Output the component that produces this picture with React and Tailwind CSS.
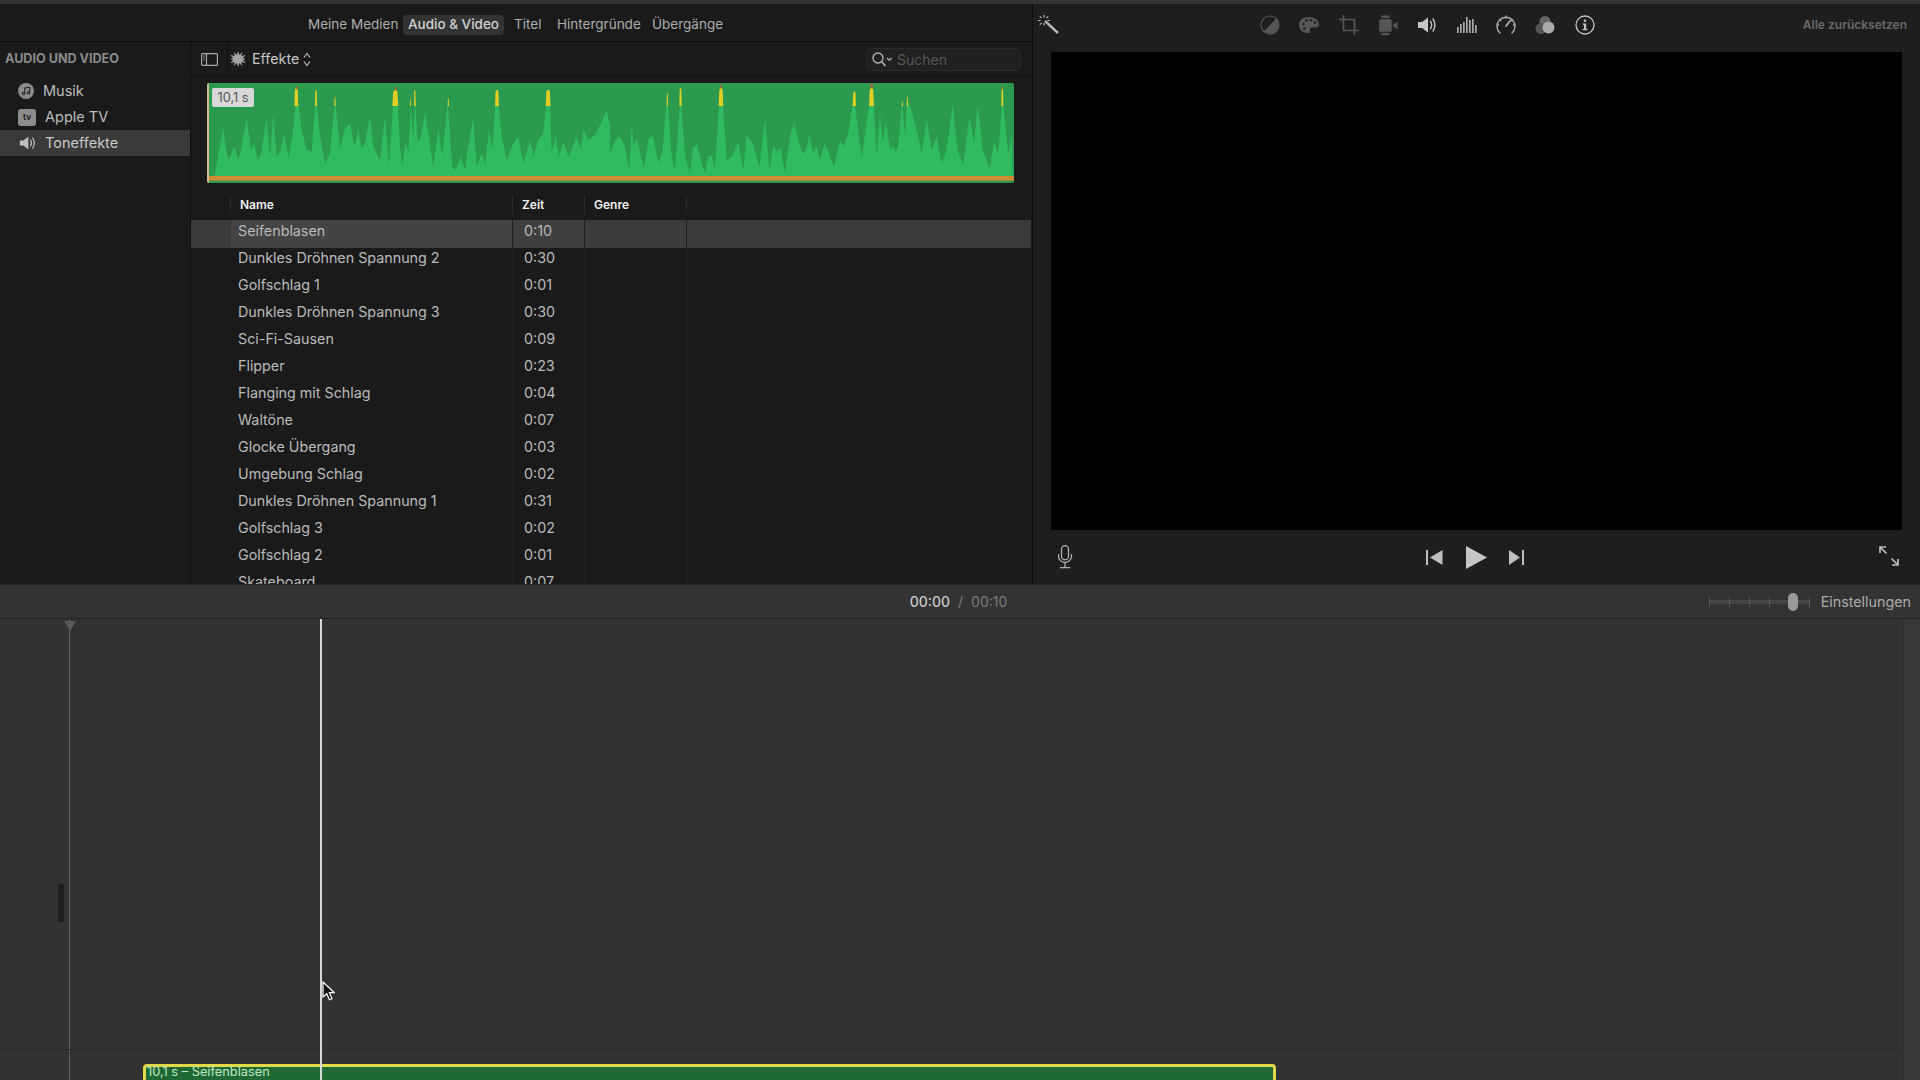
import React from "react";
import { Music } from "lucide-react";

const rows = [
  ["Seifenblasen", "0:10"],
  ["Dunkles Dröhnen Spannung 2", "0:30"],
  ["Golfschlag 1", "0:01"],
  ["Dunkles Dröhnen Spannung 3", "0:30"],
  ["Sci-Fi-Sausen", "0:09"],
  ["Flipper", "0:23"],
  ["Flanging mit Schlag", "0:04"],
  ["Waltöne", "0:07"],
  ["Glocke Übergang", "0:03"],
  ["Umgebung Schlag", "0:02"],
  ["Dunkles Dröhnen Spannung 1", "0:31"],
  ["Golfschlag 3", "0:02"],
  ["Golfschlag 2", "0:01"],
  ["Skateboard", "0:07"],
];

// waveform outline, in 1/3 px units measured from the clip
const wave = [
  [30,285],[42,210],[55,145],[62,200],[70,240],[88,200],[100,240],[110,200],[125,115],[138,210],[148,190],[158,240],[168,225],[185,110],[195,235],[205,100],[215,230],[225,215],[238,160],[250,235],[262,170],[272,75],[280,75],[290,150],[305,210],[320,215],[331,75],[336,75],[345,170],[360,250],[375,220],[390,60],[405,210],[418,150],[435,130],[448,200],[460,150],[470,205],[480,190],[495,110],[505,200],[525,240],[540,110],[552,260],[564,75],[578,75],[585,200],[592,260],[602,185],[610,220],[618,80],[625,180],[630,60],[638,190],[648,170],[660,100],[672,170],[685,265],[700,145],[712,230],[728,70],[742,260],[752,270],[768,230],[780,270],[790,200],[805,115],[815,260],[830,220],[840,255],[852,150],[862,210],[871,75],[881,75],[890,170],[905,240],[925,190],[940,170],[955,250],[975,180],[985,230],[1000,180],[1015,160],[1024,75],[1035,75],[1040,220],[1052,170],[1062,230],[1075,185],[1090,230],[1100,210],[1115,170],[1128,210],[1135,150],[1150,180],[1170,165],[1190,125],[1205,90],[1215,140],
  [1215,220],[1230,180],[1245,170],[1260,200],[1273,270],[1280,135],[1287,200],[1295,175],[1317,265],[1330,180],[1343,165],[1360,250],[1373,210],[1387,40],[1400,230],[1410,270],[1425,75],[1429,75],[1440,230],[1455,280],[1465,200],[1477,195],[1487,240],[1500,280],[1510,230],[1520,225],[1530,270],[1542,75],[1554,75],[1565,240],[1580,230],[1600,185],[1615,270],[1625,165],[1645,195],[1663,260],[1680,115],[1693,270],[1705,195],[1715,215],[1727,205],[1740,280],[1755,170],[1767,130],[1790,215],[1800,220],[1813,165],[1825,225],[1833,195],[1845,240],[1860,190],[1887,260],[1905,180],[1915,200],[1930,160],[1943,75],[1950,75],[1970,235],[1992,75],[2006,75],[2015,230],[2025,100],[2033,190],[2043,125],[2055,210],[2065,200],[2073,215],[2080,195],[2091,70],[2100,170],[2107,55],[2123,105],[2140,170],[2150,220],[2165,120],[2180,210],[2195,170],[2210,250],[2225,210],[2243,75],[2257,210],[2275,255],[2293,110],[2307,190],[2318,75],[2333,210],[2355,265],[2367,185],[2380,220],[2390,75],[2395,75],[2410,225],[2420,160],[2423,280],
];
const wavePath = "M12 290 " + wave.map((p) => "L" + p[0] + " " + p[1]).join(" ") + " L2427 290 Z";

const yellow = [
  [268,25,12],[330,30,6],[388,50,4],[562,30,18],[615,55,3],[627,30,5],[728,55,4],[870,30,12],[1022,30,15],
  [1385,40,4],[1423,25,7],[1541,25,14],[1943,35,10],[1992,25,15],[2090,65,4],[2105,50,4],[2389,25,6],
];
const red = [[273,18,4],[571,22,5],[1546,14,4],[1996,12,8],[2391,18,3]];

function Waveform() {
  return (
    <svg viewBox="6 9 2421 300" preserveAspectRatio="none" className="block w-full h-full">
      <rect x="6" y="9" width="2421" height="300" fill="#2b9a4e" />
      <path d={wavePath} fill="#31bb60" />
      {yellow.map((r, i) => (
        <polygon
          key={i}
          points={`${r[0]},78 ${r[0] + r[2]},78 ${r[0] + r[2] * 0.85},${r[1] + 6} ${r[0] + r[2] * 0.7},${r[1]} ${r[0] + r[2] * 0.3},${r[1]} ${r[0] + r[2] * 0.15},${r[1] + 6}`}
          fill="#e3cf24"
        />
      ))}
      {red.map((r, i) => (
        <rect key={i} x={r[0]} y={r[1]} width={r[2]} height="10" fill="#b9603a" />
      ))}
      <rect x="6" y="288" width="2421" height="14" fill="#cf8b33" />
      <rect x="6" y="9" width="6" height="300" fill="#d9b792" />
    </svg>
  );
}

function SpeakerIcon({ className, color }) {
  return (
    <svg viewBox="0 0 20 18" className={className} fill="none">
      <path d="M1 6h4l6-4.5v15L5 12H1z" fill={color} />
      <path d="M13.5 5.5c1.4 2 1.4 5 0 7M16 3c2.6 3.400 2.600 8.600 0 12" stroke={color} strokeWidth="1.400" strokeLinecap="round" />
    </svg>
  );
}

function TopIcons() {
  return (
    <div className="flex items-center ml-[191px] text-[#565656]">
      <div className="w-[39.4px] flex justify-center">
        <svg viewBox="0 0 20 20" className="w-[20px] h-[20px]">
          <circle cx="10" cy="10" r="9" fill="none" stroke="#565656" strokeWidth="1.200" />
          <path d="M16.400 3.600A9 9 0 0 1 3.600 16.400z" fill="#565656" />
        </svg>
      </div>
      <div className="w-[39.4px] flex justify-center">
        <svg viewBox="0 0 22 18" className="w-[22px] h-[18px]">
          <path d="M11 1C5 1 1 4.500 1 9s4 8 9 8c2 0 2.500-1 2-2.500-.5-1.700.5-3 2.300-3H18c2.300 0 3-1.500 3-3C21 4 16.500 1 11 1z" fill="#585858" />
          <circle cx="5.500" cy="8" r="1.300" fill="#1e1e1e" />
          <circle cx="8.500" cy="4.500" r="1.300" fill="#1e1e1e" />
          <circle cx="13" cy="4.200" r="1.300" fill="#1e1e1e" />
          <circle cx="17" cy="6.500" r="1.300" fill="#1e1e1e" />
          <circle cx="6.500" cy="12.500" r="1.300" fill="#1e1e1e" />
        </svg>
      </div>
      <div className="w-[39.4px] flex justify-center">
        <svg viewBox="0 0 20 20" className="ml-[1px] w-[20px] h-[20px]" fill="none" stroke="#565656" strokeWidth="1.700">
          <path d="M4.500 0v15.500H20" />
          <path d="M0 4.500h15.500V20" />
        </svg>
      </div>
      <div className="w-[39.4px] flex justify-center">
        <svg viewBox="0 0 20 20" className="w-[21px] h-[21px]">
          <rect x="2" y="4" width="12" height="12" rx="1.500" fill="#565656" />
          <rect x="4" y="0.500" width="8" height="2.400" rx="1" fill="#565656" />
          <rect x="4" y="17" width="8" height="2.400" rx="1" fill="#565656" />
          <path d="M14.500 10l5-3.500v7z" fill="#565656" />
        </svg>
      </div>
      <div className="w-[39.4px] flex justify-center">
        <SpeakerIcon className="w-[20px] h-[18px]" color="#c6c6c6" />
      </div>
      <div className="w-[39.4px] flex justify-center">
        <svg viewBox="0 0 20 16" className="w-[20px] h-[16px]" fill="#a8a8a8">
          <rect x="0" y="10" width="1.700" height="6" />
          <rect x="3" y="7" width="1.700" height="9" />
          <rect x="6" y="5" width="1.700" height="11" />
          <rect x="9" y="0" width="1.700" height="16" />
          <rect x="12" y="3" width="1.700" height="13" />
          <rect x="15" y="2" width="1.700" height="14" />
          <rect x="18" y="8" width="1.700" height="8" />
        </svg>
      </div>
      <div className="w-[39.4px] flex justify-center">
        <svg viewBox="0 0 20 20" className="w-[20px] h-[20px]" fill="none" stroke="#aaaaaa" strokeWidth="1.400" strokeLinecap="round">
          <path d="M4 18A9 9 0 1 1 16 18" />
          <path d="M10 11l4-5" strokeWidth="2" />
          <path d="M10 1v2M2.500 10H1M19 10h-1.500M4 4.500l1 1M16 4.500l-1 1" />
        </svg>
      </div>
      <div className="w-[39.4px] flex justify-center">
        <svg viewBox="0 0 20 20" className="w-[20px] h-[20px]">
          <circle cx="10" cy="6.500" r="5.500" fill="#666666" />
          <circle cx="6" cy="13.500" r="5.500" fill="#555555" />
          <circle cx="13.500" cy="12.500" r="6" fill="#aaaaaa" />
        </svg>
      </div>
      <div className="w-[39.4px] flex justify-center">
        <svg viewBox="0 0 20 20" className="w-[20px] h-[20px]">
          <circle cx="10" cy="10" r="9" fill="none" stroke="#c6c6c6" strokeWidth="1.300" />
          <circle cx="10" cy="5.800" r="1.300" fill="#c6c6c6" />
          <path d="M7.800 8.500h3.400v5.500h1.300v1.300h-5v-1.300h1.400V9.800H7.800z" fill="#c6c6c6" />
        </svg>
      </div>
    </div>
  );
}

function LeftPanel() {
  return (
    <div className="w-[1033px] shrink-0 flex flex-col bg-[#1a1a1a] border-r border-[#0c0c0c]">
      {/* browser tabs */}
      <div className="h-[38px] shrink-0 flex items-center pt-[4px] border-b border-[#0a0a0a] text-[13.500px] text-[#adadad]">
        <span className="ml-[308px] w-[95px] whitespace-nowrap">Meine Medien</span>
        <span className="w-[101px] h-[20px] flex items-center justify-center rounded-[4px] bg-[#333333] text-[#d2d2d2] font-medium whitespace-nowrap">Audio &amp; Video</span>
        <span className="ml-[10px] w-[43px]">Titel</span>
        <span className="w-[95px] whitespace-nowrap">Hintergründe</span>
        <span className="whitespace-nowrap">Übergänge</span>
      </div>

      <div className="flex-1 flex min-h-0">
        {/* sidebar */}
        <div className="w-[191px] shrink-0 border-r border-[#0f0f0f] flex flex-col">
          <div className="h-[34px] flex items-center pl-[5px] text-[12.600px] font-bold text-[#8a8a8a] whitespace-nowrap">AUDIO UND VIDEO</div>
          <div className="h-[27px] mt-[1px] flex items-center pl-[18px] text-[14.500px] text-[#bdbdbd]">
            <span className="w-[16px] h-[16px] rounded-full bg-[#8c8c8c] flex items-center justify-center">
              <Music size={10} color="#222222" strokeWidth={2.500} />
            </span>
            <span className="ml-[9px]">Musik</span>
          </div>
          <div className="h-[26px] flex items-center pl-[18px] text-[14.500px] text-[#bdbdbd]">
            <span className="w-[18px] h-[17px] rounded-[3px] bg-[#8c8c8c] flex items-center justify-center text-[8px] font-bold text-[#222222]">tv</span>
            <span className="ml-[9px]">Apple TV</span>
          </div>
          <div className="h-[26px] flex items-center pl-[19px] bg-[#3a3a3a] text-[14.500px] text-[#c8c8c8]">
            <SpeakerIcon className="w-[17px] h-[16px]" color="#c0c0c0" />
            <span className="ml-[9px]">Toneffekte</span>
          </div>
        </div>

        {/* browser */}
        <div className="flex-1 min-w-0 flex flex-col overflow-hidden">
          <div className="h-[35px] shrink-0 flex items-center border-b border-[#101010]">
            <div className="w-[37px] h-full flex items-center justify-center border-r border-[#101010]">
              <svg viewBox="0 0 17 13" className="w-[17px] h-[13px]" fill="none" stroke="#a8a8a8" strokeWidth="1.200">
                <rect x="0.600" y="0.600" width="15.800" height="11.800" rx="1" />
                <path d="M5.500 1v11" />
                <path d="M2 3h2M2 5h2M2 7h2" strokeWidth="0.800" />
              </svg>
            </div>
            <svg viewBox="0 0 16 16" className="ml-[2px] w-[16px] h-[16px]">
              <path d="M8 0l1.300 4 3-2.900-1 4L15.800 4l-2.900 3 3 1-3 1 2.900 3-4.500-1.100 1 4-3-2.900L8 16l-1.300-4-3 2.900 1-4-4.500 1.100 2.900-3-3-1 3-1L0.200 4l4.500 1.100-1-4 3 2.900z" fill="#a4a4a4" />
            </svg>
            <span className="ml-[6px] text-[14.300px] text-[#c6c6c6]">Effekte</span>
            <svg viewBox="0 0 8 15" className="ml-[4px] w-[8px] h-[15px]" fill="none" stroke="#b8b8b8" strokeWidth="1.200">
              <path d="M1 5.500l3-4 3 4M1 9.500l3 4 3-4" />
            </svg>
            <div className="ml-auto mr-[11px] w-[155px] h-[23px] flex items-center pl-[5px] rounded-[5px] bg-[#202020] border border-[#2a2a2a]">
              <svg viewBox="0 0 20 15" className="w-[20px] h-[15px]" fill="none" stroke="#b4b4b4" strokeWidth="1.300">
                <circle cx="6" cy="6" r="5" />
                <path d="M9.500 9.500l4 4.500" strokeWidth="1.600" />
                <path d="M15 6l2.300 2.300L19.600 6" strokeWidth="1.200" />
              </svg>
              <span className="ml-[5px] text-[14px] text-[#565656]">Suchen</span>
            </div>
          </div>

          {/* waveform of selected sound */}
          <div className="mt-[6px] ml-[16px] w-[807px] h-[100px] shrink-0 relative rounded-[2px] overflow-hidden">
            <Waveform />
            <span className="absolute left-[5px] top-[5px] w-[42px] h-[19px] flex items-center justify-center rounded-[2px] bg-[#d8d8d8] text-[12.800px] text-[#555555]">10,1 s</span>
          </div>

          {/* table header */}
          <div className="mt-[13px] h-[18px] shrink-0 flex items-center text-[12px] font-semibold text-[#f0f0f0]">
            <div className="w-[40px] h-full border-r border-[#2c2c2c]" />
            <div className="w-[282px] h-full flex items-center pl-[9px] border-r border-[#2c2c2c]">Name</div>
            <div className="w-[72px] h-full flex items-center pl-[9px] border-r border-[#2c2c2c]">Zeit</div>
            <div className="w-[102px] h-full flex items-center pl-[9px] border-r border-[#2c2c2c]">Genre</div>
          </div>

          {/* table rows */}
          <div className="mt-[6px] mr-[1px] flex-1 min-h-0 overflow-hidden">
            {rows.map((row, i) => (
              <div key={row[0]} className={i === 0 ? "h-[28px] flex bg-[#3b3b3b] text-[14.300px] text-[#b8b8b8]" : "h-[27px] flex text-[14.300px] text-[#bababa]"}>
                <div className="w-[40px] shrink-0" />
                <div className={i === 0 ? "w-[282px] shrink-0 pl-[7px] pb-[6px] flex items-center bg-[#444444] border-r border-[#1d1d1d]" : "w-[282px] shrink-0 pl-[7px] pb-[8px] flex items-center border-r border-[#202020]"}>{row[0]}</div>
                <div className={i === 0 ? "w-[72px] shrink-0 pl-[11px] pb-[6px] flex items-center bg-[#3f3f3f] border-r border-[#1d1d1d]" : "w-[72px] shrink-0 pl-[11px] pb-[8px] flex items-center border-r border-[#202020]"}>{row[1]}</div>
                <div className={i === 0 ? "w-[102px] shrink-0 border-r border-[#1d1d1d]" : "w-[102px] shrink-0 border-r border-[#202020]"} />
              </div>
            ))}
          </div>
        </div>
      </div>
    </div>
  );
}

function Viewer() {
  return (
    <div className="flex-1 min-w-0 flex flex-col bg-[#1e1e1e]">
      <div className="h-[48px] shrink-0 flex items-center pl-[4px]">
        <svg viewBox="0 0 22 20" className="mb-[8px] w-[22px] h-[20px]" fill="none" stroke="#b4b4b4">
          <path d="M8 7l13 12" strokeWidth="2.400" />
          <path d="M7 1v2.500M7 9v2.500M1 6.500h2.500M10.500 6.500H13M2.800 2.300l1.800 1.800M11.200 2.300L9.400 4.100M2.800 10.700l1.800-1.800" strokeWidth="1.200" />
        </svg>
        <div className="mb-[6px]"><TopIcons /></div>
        <span className="mb-[6px] ml-auto mr-[13px] text-[12px] font-semibold text-[#6a6a6a] whitespace-nowrap">Alle zurücksetzen</span>
      </div>
      <div className="mx-[18px] h-[478px] shrink-0 bg-black" />
      <div className="flex-1 flex items-center">
        <svg viewBox="0 0 18 24" className="ml-[23px] w-[18px] h-[24px]" fill="none" stroke="#b0b0b0" strokeWidth="1.300">
          <rect x="5.500" y="0.700" width="7" height="14" rx="3.500" />
          <path d="M2.500 9v2a6.500 6.500 0 0 0 13 0V9M9 18v4M4 22.700h10" />
        </svg>
        <svg viewBox="0 0 17 15" className="ml-[352px] w-[17px] h-[15px]" fill="#bebebe">
          <rect x="0" y="0" width="2" height="15" />
          <path d="M16.500 0v15L4 7.500z" />
        </svg>
        <svg viewBox="0 0 21 23" className="ml-[23px] w-[21px] h-[23px]" fill="#c6c6c6">
          <path d="M0 0l21 11.500L0 23z" />
        </svg>
        <svg viewBox="0 0 15 15" className="ml-[22px] w-[15px] h-[15px]" fill="#bebebe">
          <path d="M0 0v15l11-7.500z" />
          <rect x="13" y="0" width="2" height="15" />
        </svg>
        <svg viewBox="0 0 20 20" className="ml-auto mr-[21px] mb-[2px] w-[20px] h-[20px]" fill="none" stroke="#bcbcbc" strokeWidth="1.700">
          <path d="M1 7V1h6M1 1l6.500 6.500M19 13v6h-6M19 19l-6.500-6.500" />
        </svg>
      </div>
    </div>
  );
}

function TimelineBar() {
  return (
    <div className="h-[35px] shrink-0 flex items-center bg-[#333333] border-y border-[#232323]">
      <div className="flex-1" />
      <div className="flex items-center text-[14px] whitespace-nowrap pl-[6px]">
        <span className="font-medium text-[#c8c8c8]">00:00</span>
        <span className="ml-[8px] text-[#7a7a7a]">/</span>
        <span className="ml-[8px] text-[#7a7a7a]">00:10</span>
      </div>
      <div className="flex-1 flex items-center justify-end pr-[9px] pt-[1px]">
        <div className="relative w-[101px] h-[18px] flex items-center justify-between">
          <div className="absolute left-0 right-0 top-[7px] h-[4px] bg-[#454545]" />
          <span className="relative w-[1px] h-[10px] bg-[#5a5a5a]" />
          <span className="relative w-[1px] h-[10px] bg-[#5a5a5a]" />
          <span className="relative w-[1px] h-[10px] bg-[#5a5a5a]" />
          <span className="relative w-[1px] h-[10px] bg-[#5a5a5a]" />
          <span className="relative w-[1px] h-[10px] bg-[#5a5a5a]" />
          <span className="relative w-[1px] h-[10px] bg-[#5a5a5a]" />
          <div className="absolute left-[79px] top-0 w-[10px] h-[18px] rounded-full bg-[#9a9a9a]" />
        </div>
        <span className="ml-[11px] text-[14.300px] text-[#ababab] whitespace-nowrap">Einstellungen</span>
      </div>
    </div>
  );
}

function Timeline() {
  return (
    <div className="flex-1 min-h-0 flex bg-[#323232]">
      <div className="relative flex-1 overflow-hidden">
        {/* start marker */}
        <div className="absolute left-[69px] top-0 bottom-0 w-[1px] bg-[#5c5c5c]" />
        <svg viewBox="0 0 12 10" className="absolute left-[64px] top-[2px] w-[12px] h-[10px]">
          <path d="M0 0h12L6 10z" fill="#595959" />
        </svg>
        {/* resize handle */}
        <div className="absolute left-[58px] top-[265px] w-[6px] h-[38px] bg-[#1f1f1f]" />
        {/* audio lane line */}
        <div className="absolute left-0 right-0 bottom-[30px] h-[1px] bg-[#2b2b2b]" />
        {/* clip */}
        <div className="absolute left-[143px] top-[445px] w-[1133px] h-[40px] rounded-t-[4px] border-[3px] border-[#e3d84a] bg-[#1f6a34] pl-[1px] text-[12.800px] leading-[10px] text-[#bfe6c2] whitespace-nowrap">
          10,1 s – Seifenblasen
        </div>
        {/* playhead */}
        <div className="absolute left-[320px] top-0 bottom-0 w-[2px] bg-[#d8d8d8]" />
        {/* mouse pointer */}
        <svg viewBox="0 0 13 20" className="absolute left-[322px] top-[362px] w-[13px] h-[20px]">
          <path d="M1 1v15l3.800-3.300 2.600 6 2.600-1.100-2.600-5.900h5z" fill="#111111" stroke="#ffffff" strokeWidth="1.200" />
        </svg>
      </div>
      <div className="w-[17px] shrink-0 bg-[#383838] border-l border-[#2f2f2f]" />
    </div>
  );
}

export default function App() {
  return (
    <div className="w-[1920px] h-[1080px] overflow-hidden flex flex-col bg-[#323232] [font-family:Inter,sans-serif]">
      <div className="h-[4px] shrink-0 bg-[#333333]" />
      <div className="h-[580px] shrink-0 flex">
        <LeftPanel />
        <Viewer />
      </div>
      <TimelineBar />
      <Timeline />
    </div>
  );
}
